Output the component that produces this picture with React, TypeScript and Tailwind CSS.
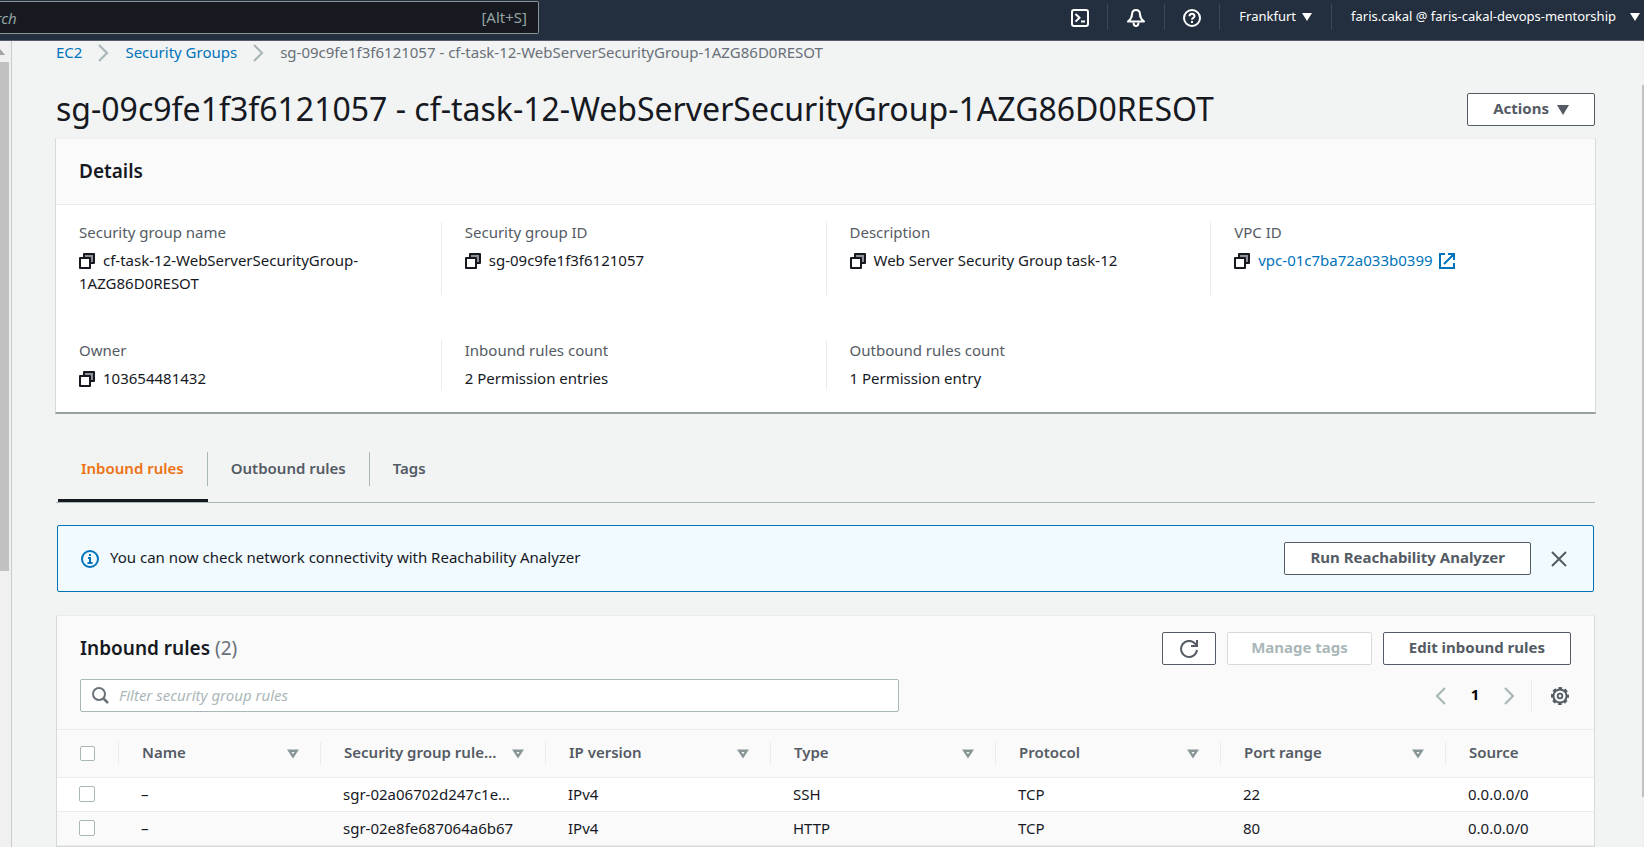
import React from "react";

const columns = ["Name", "Security group rule…", "IP version", "Type", "Protocol", "Port range", "Source"];

const rules = [
  ["–", "sgr-02a06702d247c1e…", "IPv4", "SSH", "TCP", "22", "0.0.0.0/0"],
  ["–", "sgr-02e8fe687064a6b67", "IPv4", "HTTP", "TCP", "80", "0.0.0.0/0"],
];

function CopyIcon() {
  return (
    <button type="button" aria-label="Copy" className="mr-2 inline-block align-[-3px]">
      <svg width="16" height="16" viewBox="0 0 16 16" fill="none" stroke="#16191f" strokeWidth="2" strokeLinejoin="round" className="block">
        <path d="M5 5V1h10v9h-4" fill="#8d9096" />
        <path d="M1 5h10v10H1z" fill="#fff" />
      </svg>
    </button>
  );
}

function ExternalIcon() {
  return (
    <svg width="16" height="16" viewBox="0 0 16 16" fill="none" stroke="#0073bb" strokeWidth="2" className="ml-1.5 inline-block align-[-3px]">
      <path d="M6 1H1v14h14v-5M9 1h6v6M15 1L5 11" />
    </svg>
  );
}

function Chevron({ left = false }: { left?: boolean }) {
  return (
    <svg width="11" height="18" viewBox="0 0 11 18" fill="none" stroke="#aab7b8" strokeWidth="2.200" className="shrink-0">
      <path d={left ? "M10 1L2 9l8 8" : "M1 1l8 8-8 8"} />
    </svg>
  );
}

function Field({ label, className = "", children }: { label: string; className?: string; children: React.ReactNode }) {
  return (
    <div className={"px-[23px] " + className}>
      <dt className="leading-[20px] text-[#545b64]">{label}</dt>
      <dd className="mt-[7px] leading-[23px] text-[#16191f]">{children}</dd>
    </div>
  );
}

const buttonClass = "flex h-[33px] items-center justify-center rounded-xs border border-[#545b64] bg-white px-[25px] pb-0.5 font-bold text-[#545b64] whitespace-nowrap";

export default function App() {
  return (
    <div className="flex h-screen flex-col overflow-hidden bg-[#f2f3f3] font-['Noto_Sans','Open_Sans',sans-serif] text-[15px] text-[#16191f]">
      <header className="flex h-[41px] shrink-0 items-start justify-between border-b border-[#545b64] bg-[#232f3e] text-white">
        <div className="mt-px flex h-[33px] w-[539px] items-center justify-between overflow-hidden rounded-r-xs border border-l-0 border-[#879596] bg-[#16191f] pr-[11px] text-[#95a5a6]">
          <input type="text" aria-label="Search" placeholder="Search" className="-ml-7 h-full flex-1 bg-transparent italic placeholder:text-[#95a5a6]" />
          <span>[Alt+S]</span>
        </div>
        <nav className="flex items-center pt-1 text-[13px]">
          <button type="button" aria-label="CloudShell" className="flex h-[26px] items-center border-r border-[#414750] px-[18px] pt-0.5">
            <svg width="18" height="18" viewBox="0 0 18 18" fill="none" stroke="currentColor" strokeWidth="2">
              <rect x="1" y="1" width="16" height="16" rx="2" />
              <path d="M4.500 5l4 3.800-4 3.800M10 12.500h4" />
            </svg>
          </button>
          <button type="button" aria-label="Notifications" className="flex h-[26px] items-center border-r border-[#414750] px-[18px] pt-0.5">
            <svg width="20" height="18" viewBox="0 0 20 18" fill="none" stroke="currentColor" strokeWidth="2">
              <path d="M10 1C7.200 1 6 3.300 6 5.500 6 8.500 5 10 2 12.500h16C15 10 14 8.500 14 5.500 14 3.300 12.800 1 10 1z" strokeLinejoin="round" />
              <path d="M7.500 13.500c0 4.700 5 4.700 5 0" />
            </svg>
          </button>
          <button type="button" aria-label="Help" className="flex h-[26px] items-center border-r border-[#414750] px-[18px] pt-0.5">
            <svg width="18" height="18" viewBox="0 0 18 18" fill="none" stroke="currentColor" strokeWidth="2">
              <circle cx="9" cy="9" r="8" />
              <path d="M6.500 7.200c0-3.400 5-3.400 5 0 0 1.800-2.500 1.700-2.500 3.500M9 12v2" />
            </svg>
          </button>
          <button type="button" className="flex h-[26px] items-center gap-1.5 border-r border-[#414750] px-[19px]">
            Frankfurt
            <svg width="10" height="8" viewBox="0 0 10 8" fill="currentColor"><path d="M0 0h10L5 8z" /></svg>
          </button>
          <button type="button" className="flex h-[26px] w-[312px] items-center justify-between pr-1 pl-[19px]">
            faris.cakal @ faris-cakal-devops-mentorship
            <svg width="10" height="8" viewBox="0 0 10 8" fill="currentColor"><path d="M0 0h10L5 8z" /></svg>
          </button>
        </nav>
      </header>

      <div className="flex min-h-0 flex-1">
        <div className="flex w-[12px] shrink-0 flex-col border-r border-[#c8cbcb] bg-[#f0f0f0]">
          <svg width="9" height="21" viewBox="0 0 9 21" fill="#a3a3a3"><path d="M-5 14h10L0 8z" /></svg>
          <div className="h-[509px] w-[9px] bg-[#c1c1c1]" />
        </div>

        <main className="min-w-0 flex-1 overflow-hidden pr-[47px] pl-11">
          <nav aria-label="Breadcrumb" className="flex h-[23px] items-center gap-4 whitespace-nowrap">
            <a href="#ec2" className="text-[#0073bb]">EC2</a>
            <Chevron />
            <a href="#groups" className="text-[#0073bb]">Security Groups</a>
            <Chevron />
            <span className="text-[#687078]">sg-09c9fe1f3f6121057 - cf-task-12-WebServerSecurityGroup-1AZG86D0RESOT</span>
          </nav>

          <div className="mt-7 flex items-center justify-between">
            <h1 className="text-[32px] leading-[34px] whitespace-nowrap">sg-09c9fe1f3f6121057 - cf-task-12-WebServerSecurityGroup-1AZG86D0RESOT</h1>
            <button type="button" className={buttonClass + " gap-2"}>
              Actions
              <svg width="12" height="10" viewBox="0 0 12 10" fill="currentColor" className="mt-1"><path d="M0 0h12L6 10z" /></svg>
            </button>
          </div>

          <section className="-mx-px mt-3 border-x border-t border-b-2 border-x-[#d5dbdb] border-t-[#eaeded] border-b-[#95a0a1] bg-white">
            <h2 className="border-b border-[#eaeded] bg-[#fafafa] px-[23px] py-[20px] text-[19px] leading-[25px] font-semibold">Details</h2>
            <dl className="grid grid-cols-4 gap-y-[45px] pt-[17px] pb-[22px]">
              <Field label="Security group name"><CopyIcon />cf-task-12-WebServerSecurityGroup-1AZG86D0RESOT</Field>
              <Field label="Security group ID" className="border-l border-[#eaeded]"><CopyIcon />sg-09c9fe1f3f6121057</Field>
              <Field label="Description" className="border-l border-[#eaeded]"><CopyIcon />Web Server Security Group task-12</Field>
              <Field label="VPC ID" className="border-l border-[#eaeded]">
                <CopyIcon /><a href="#vpc" className="text-[#0073bb]">vpc-01c7ba72a033b0399<ExternalIcon /></a>
              </Field>
              <Field label="Owner"><CopyIcon />103654481432</Field>
              <Field label="Inbound rules count" className="border-l border-[#eaeded]">2 Permission entries</Field>
              <Field label="Outbound rules count" className="border-l border-[#eaeded]">1 Permission entry</Field>
            </dl>
          </section>

          <div role="tablist" className="mt-6 flex h-[65px] border-b border-[#aab7b8] pl-0.5 font-semibold text-[#545b64]">
            <button type="button" role="tab" aria-selected="true" className="flex items-start border-b-3 border-[#16191f] pt-[14px] text-[#ec7211]">
              <span className="flex h-[34px] items-center border-r border-[#aab7b8] px-[23px] pb-0.5">Inbound rules</span>
            </button>
            <button type="button" role="tab" aria-selected="false" className="flex items-start pt-[14px]">
              <span className="flex h-[34px] items-center border-r border-[#aab7b8] px-[23px] pb-0.5">Outbound rules</span>
            </button>
            <button type="button" role="tab" aria-selected="false" className="flex items-start pt-[14px]">
              <span className="flex h-[34px] items-center px-[23px] pb-0.5">Tags</span>
            </button>
          </div>

          <div role="status" className="mx-px mt-[22px] flex h-[67px] items-center rounded-xs border border-[#0073bb] bg-[#f1faff] pr-[26px] pl-[23px]">
            <svg width="18" height="18" viewBox="0 0 18 18" fill="none" stroke="#0073bb" strokeWidth="2" className="mr-[11px]">
              <circle cx="9" cy="9" r="8" />
              <path d="M8 5h2M7 8h2v5M6.500 13h5" />
            </svg>
            <span className="flex-1 pb-0.5">You can now check network connectivity with Reachability Analyzer</span>
            <button type="button" className={buttonClass}>Run Reachability Analyzer</button>
            <button type="button" aria-label="Dismiss" className="ml-5">
              <svg width="16" height="16" viewBox="0 0 16 16" fill="none" stroke="#545b64" strokeWidth="2"><path d="M1 1l14 14M15 1L1 15" /></svg>
            </button>
          </div>

          <section className="mt-[23px] border border-[#d5dbdb] border-t-[#eaeded] bg-[#fafafa]">
            <div className="flex items-center gap-[11px] px-[23px] pt-4">
              <h2 className="flex-1 text-[19px] leading-[25px] font-semibold">Inbound rules <span className="font-normal text-[#687078]">(2)</span></h2>
              <button type="button" aria-label="Refresh" className="flex h-[33px] w-[54px] items-center justify-center rounded-xs border border-[#545b64] bg-white">
                <svg width="18" height="18" viewBox="0 0 18 18" fill="none" stroke="#545b64" strokeWidth="2"><path d="M17 10a8 8 0 1 1-2-6.500L17 6M17 0v6h-6" /></svg>
              </button>
              <button type="button" disabled className="flex h-[33px] items-center rounded-xs border border-[#d5dbdb] bg-white px-[23px] pb-0.5 font-bold text-[#aab7b8]">Manage tags</button>
              <button type="button" className={buttonClass}>Edit inbound rules</button>
            </div>
            <div className="flex items-center justify-between px-[23px] pt-3.5 pb-[17px]">
              <div className="flex h-[33px] w-[819px] items-center rounded-xs border border-[#aab7b8] bg-white pl-[11px]">
                <svg width="17" height="17" viewBox="0 0 17 17" fill="none" stroke="#687078" strokeWidth="2"><circle cx="7" cy="7" r="6" /><path d="M11 11l5 5" strokeWidth="2.500" /></svg>
                <input type="text" aria-label="Filter security group rules" placeholder="Filter security group rules" className="ml-2.5 h-full flex-1 pb-0.5 italic placeholder:text-[#aab7b8]" />
              </div>
              <div className="flex items-center">
                <button type="button" aria-label="Previous page"><Chevron left /></button>
                <span className="w-[58px] pb-0.5 text-center font-bold text-black">1</span>
                <button type="button" aria-label="Next page"><Chevron /></button>
                <button type="button" aria-label="Preferences" className="ml-4 flex h-[33px] items-center border-l border-[#eaeded] pr-0.5 pl-[19px]">
                  <svg width="18" height="18" viewBox="0 0 18 18" fill="none" stroke="#545b64" strokeWidth="2">
                    <circle cx="9" cy="9" r="6.600" />
                    <circle cx="9" cy="9" r="8" strokeDasharray="3.600 2.683" strokeDashoffset="1.800" />
                    <circle cx="9" cy="9" r="2.300" strokeWidth="1.800" />
                  </svg>
                </button>
              </div>
            </div>

            <table className="w-full table-fixed border-t border-[#eaeded] text-left">
              <colgroup>
                <col className="w-[61px]" />
                <col className="w-[202px]" />
                <col className="w-[225px]" />
                <col className="w-[225px]" />
                <col className="w-[225px]" />
                <col className="w-[225px]" />
                <col className="w-[225px]" />
                <col />
              </colgroup>
              <thead>
                <tr className="h-[48px] border-b border-[#eaeded] text-[#545b64]">
                  <th className="pl-[23px]">
                    <input type="checkbox" aria-label="Select all rules" className="block size-[15px] appearance-none rounded-xs border border-[#aab7b8] bg-white" />
                  </th>
                  {columns.map((name) => (
                    <th key={name} className="p-0 font-semibold">
                      <div className="flex h-[23px] items-center justify-between border-l border-[#eaeded] pr-[21px] pl-[23px]">
                        <span className="pb-0.5 whitespace-nowrap">{name}</span>
                        {name !== "Source" && (
                          <svg width="12" height="10" viewBox="0 0 12 10" fill="none" stroke="#879596" strokeWidth="2.400" className="shrink-0"><path d="M2.300 1.800h7.400L6 7.300z" /></svg>
                        )}
                      </div>
                    </th>
                  ))}
                </tr>
              </thead>
              <tbody>
                {rules.map((rule) => (
                  <tr key={rule[1]} className="h-[34px] border-b border-[#eaeded] odd:bg-white even:bg-[#fafafa]">
                    <td className="pb-0.5 pl-[22px]">
                      <input type="checkbox" aria-label={"Select " + rule[1]} className="block size-4 appearance-none rounded-xs border border-[#aab7b8] bg-white" />
                    </td>
                    {rule.map((value, i) => (
                      <td key={i} className="pl-[23px] whitespace-nowrap">{value}</td>
                    ))}
                  </tr>
                ))}
              </tbody>
            </table>
          </section>
        </main>

        <div className="w-[2px] shrink-0 bg-[#f0f0f0] pt-11">
          <div className="h-[712px] bg-[#c1c1c1]" />
        </div>
      </div>
    </div>
  );
}
